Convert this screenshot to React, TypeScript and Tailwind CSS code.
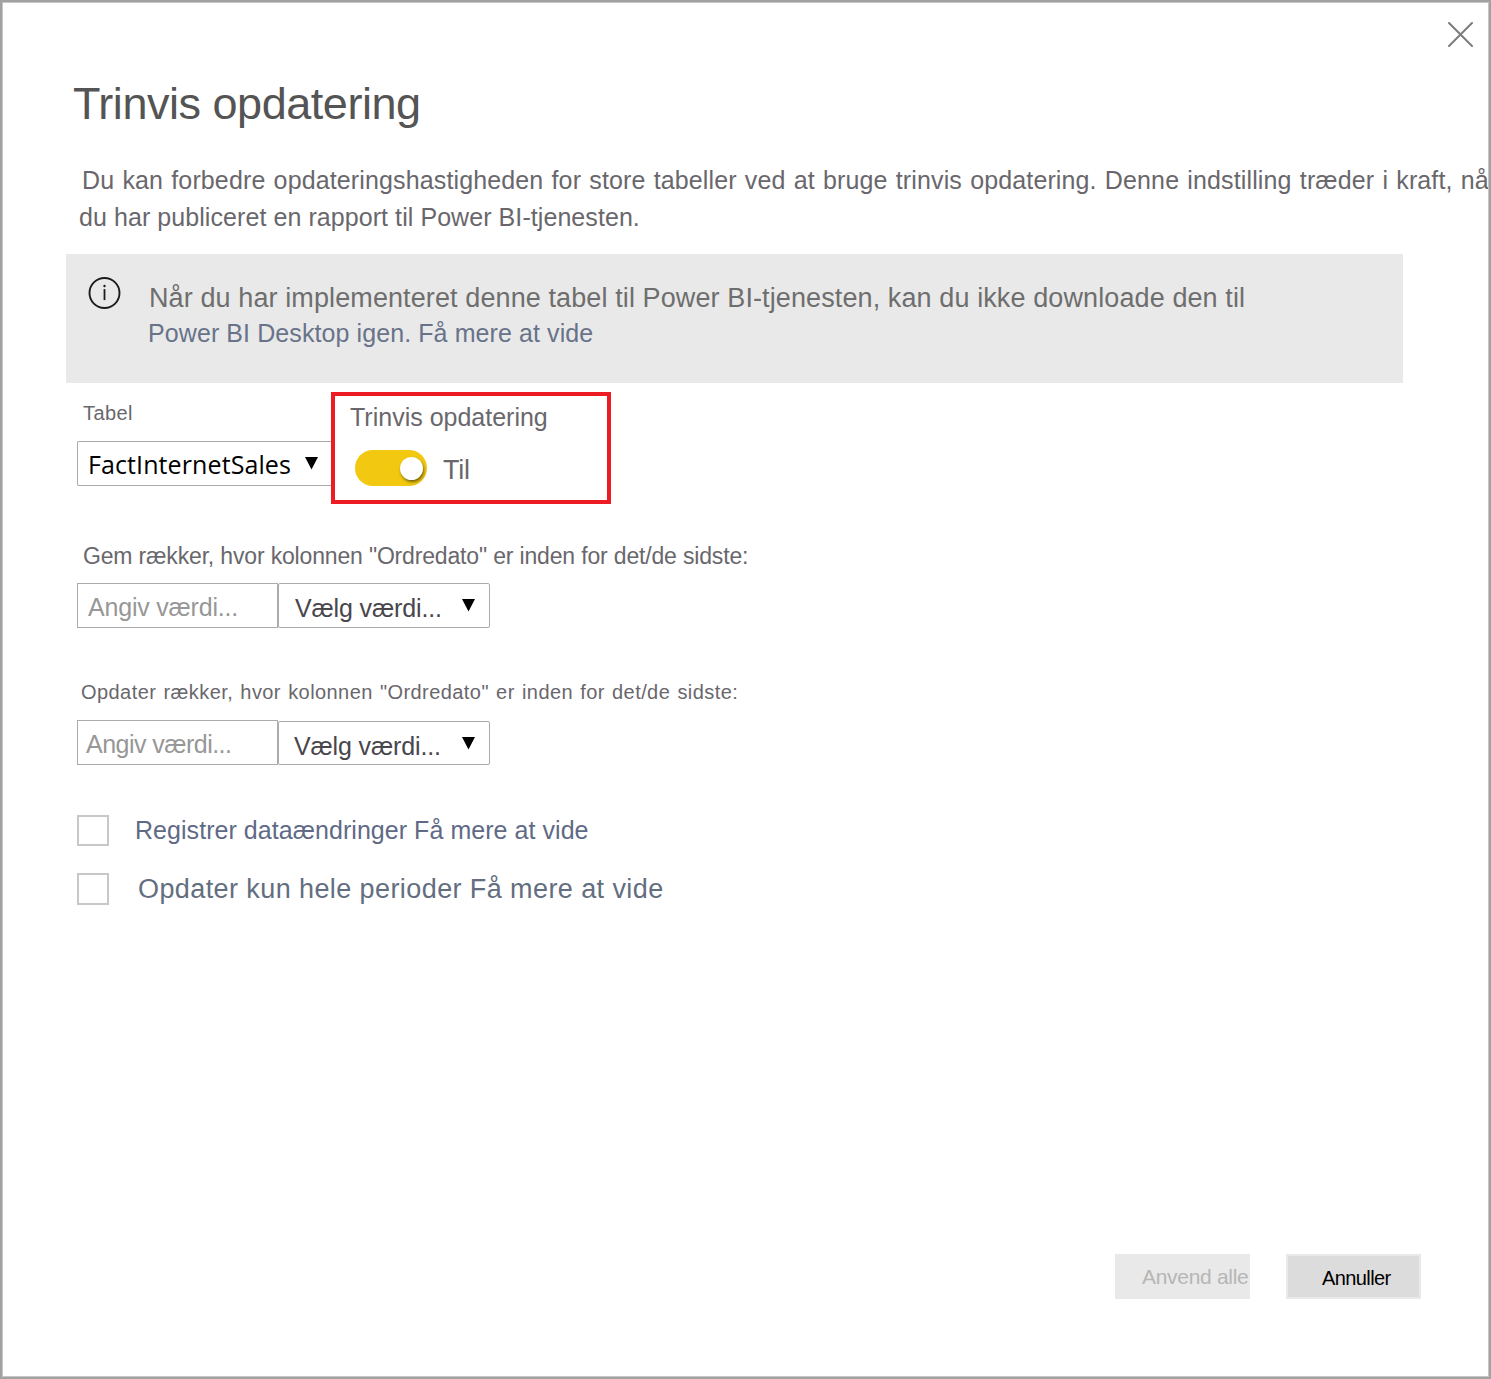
import type { ReactNode } from "react";

function Arrow({ className }: { className: string }) {
  return (
    <svg className={`shrink-0 ${className}`} width="13" height="13" viewBox="0 0 13 13" aria-hidden="true">
      <path d="M0 0H13L6.5 12.5Z" fill="#000" />
    </svg>
  );
}

function Check({ className, children }: { className: string; children: ReactNode }) {
  return (
    <label className={`flex whitespace-nowrap ${className}`}>
      <span className="h-full w-8 shrink-0 border-2 border-[#c8c8c8]" />
      {children}
    </label>
  );
}

export default function App() {
  return (
    <div className="h-[1379px] w-[1491px] overflow-hidden border-2 border-[#a2a2a2] bg-white font-['Liberation_Sans',Arial,sans-serif] text-[#69676c]">
      <div className="flex h-full w-full flex-col overflow-hidden border border-[#c6c6c6] whitespace-nowrap">
        <div className="flex shrink-0 justify-end pt-[19px] pr-[15px]">
          <button aria-label="Luk">
            <svg width="25" height="25" viewBox="0 0 25 25">
              <path d="M1 1L24 24M24 1L1 24" stroke="#7c7c7c" strokeWidth="2" strokeLinecap="round" />
            </svg>
          </button>
        </div>

        <h1 className="mt-[30px] ml-[70px] text-[45px] leading-[54px] tracking-[-0.47px] text-[#545454]">Trinvis opdatering</h1>

        <div className="mt-[30px] text-[25px]">
          <p className="ml-[79px] leading-[38px] tracking-[0.13px] [word-spacing:1.1px]">
            Du kan forbedre opdateringshastigheden for store tabeller ved at bruge trinvis opdatering. Denne indstilling træder i kraft, nå
          </p>
          <p className="ml-[76px] leading-[36px] tracking-[0.07px]">du har publiceret en rapport til Power BI-tjenesten.</p>
        </div>

        <section className="mt-[19px] ml-[63px] flex h-[129px] w-[1337px] shrink-0 bg-[#e9e9e9]">
          <svg className="mt-[22px] ml-[22px] shrink-0" width="33" height="34" viewBox="0 0 33 34">
            <circle cx="16.5" cy="17" r="15" fill="none" stroke="#1c1c1c" strokeWidth="1.9" />
            <path d="M16.5 13.1V24.1" stroke="#1c1c1c" strokeWidth="1.8" />
            <circle cx="16.5" cy="10" r="1.2" fill="#1c1c1c" />
          </svg>
          <div className="mt-[26px] ml-[27px]">
            <p className="ml-px text-[27px] leading-[36px] tracking-[0.106px] text-[#6e6e6e]">
              Når du har implementeret denne tabel til Power BI-tjenesten, kan du ikke downloade den til
            </p>
            <p className="text-[25px] leading-[34px] tracking-[0.09px] text-[#687389]">Power BI Desktop igen. Få mere at vide</p>
          </div>
        </section>

        <section className="ml-[74px] flex h-[121px] shrink-0">
          <div className="w-[254px] pt-4">
            <p className="pl-[6px] text-[20px] leading-[28px] tracking-[0.4px]">Tabel</p>
            <div className="mt-[14px] flex h-[45px] rounded-l-[2px] border border-r-0 border-[#ababab]">
              <span className="ml-[10px] font-['Open_Sans',sans-serif] text-[25px] leading-[44px] tracking-[0.1px] text-black">FactInternetSales</span>
              <Arrow className="mt-[15px] mr-[13px] ml-auto" />
            </div>
          </div>
          <div className="mt-[9px] h-[112px] w-[280px] border-4 border-[#ed1c24] pl-[15px]">
            <p className="mt-[5px] text-[25px] leading-[32px]">Trinvis opdatering</p>
            <div className="mt-[17px] ml-[5px] flex">
              <div className="flex h-9 w-[72px] items-center justify-end rounded-full bg-[#f2c811] pr-1">
                <span className="size-[23px] rounded-full bg-white shadow-[1px_2px_3px_rgba(0,0,0,0.5)]" />
              </div>
              <span className="ml-4 text-[27px] leading-[40px] tracking-[-0.2px]">Til</span>
            </div>
          </div>
        </section>

        <section className="mt-[37px] ml-[74px] h-[87px] shrink-0">
          <p className="pl-[6px] text-[23px] leading-[30px] tracking-[-0.165px]">
            Gem rækker, hvor kolonnen "Ordredato" er inden for det/de sidste:
          </p>
          <div className="mt-3 flex h-[45px] text-[25px]">
            <div className="w-[201px] border border-[#ababab] pl-[10px] leading-[46px] tracking-[-0.2px] text-[#979797]">Angiv værdi...</div>
            <div className="flex w-[212px] rounded-[2px] border border-[#ababab] pl-4 leading-[48px] tracking-[-0.14px] text-[#48464b]">
              Vælg værdi...
              <Arrow className="mt-[15px] ml-auto mr-[14px]" />
            </div>
          </div>
        </section>

        <section className="mt-[51px] ml-[74px] h-[86px] shrink-0">
          <p className="pl-1 text-[20px] leading-[26px] tracking-[0.43px] [word-spacing:1.2px]">
            Opdater rækker, hvor kolonnen "Ordredato" er inden for det/de sidste:
          </p>
          <div className="mt-[15px] flex h-[45px] items-end text-[25px]">
            <div className="h-[45px] w-[201px] border border-[#ababab] pl-2 leading-[46px] tracking-[-0.53px] text-[#979797]">Angiv værdi...</div>
            <div className="flex h-11 w-[212px] rounded-[2px] border border-[#ababab] pl-[15px] leading-[48px] tracking-[-0.14px] text-[#48464b]">
              Vælg værdi...
              <Arrow className="mt-[15px] ml-auto mr-[14px]" />
            </div>
          </div>
        </section>

        <Check className="mt-[50px] ml-[74px] h-[31px] shrink-0">
          <span className="ml-[26px] text-[25px] leading-[31px] tracking-[0.05px] text-[#5f6a86]">Registrer dataændringer Få mere at vide</span>
        </Check>
        <Check className="mt-[27px] ml-[74px] h-8 shrink-0">
          <span className="ml-[29px] text-[27px] leading-[33px] tracking-[0.41px] text-[#636e80]">Opdater kun hele perioder Få mere at vide</span>
        </Check>

        <footer className="mt-[349px] mr-[67px] flex h-[45px] shrink-0 justify-end gap-9">
          <button className="w-[135px] bg-[#e9e9e9] pl-[27px] text-left text-[21px] leading-[45px] tracking-[-0.3px] text-[#b6b6b6]">Anvend alle</button>
          <button className="w-[135px] border-2 border-[#e9e9e9] bg-[#dcdcdc] pl-[34px] text-left text-[20px] leading-[44px] tracking-[-0.6px] text-black">Annuller</button>
        </footer>
      </div>
    </div>
  );
}
